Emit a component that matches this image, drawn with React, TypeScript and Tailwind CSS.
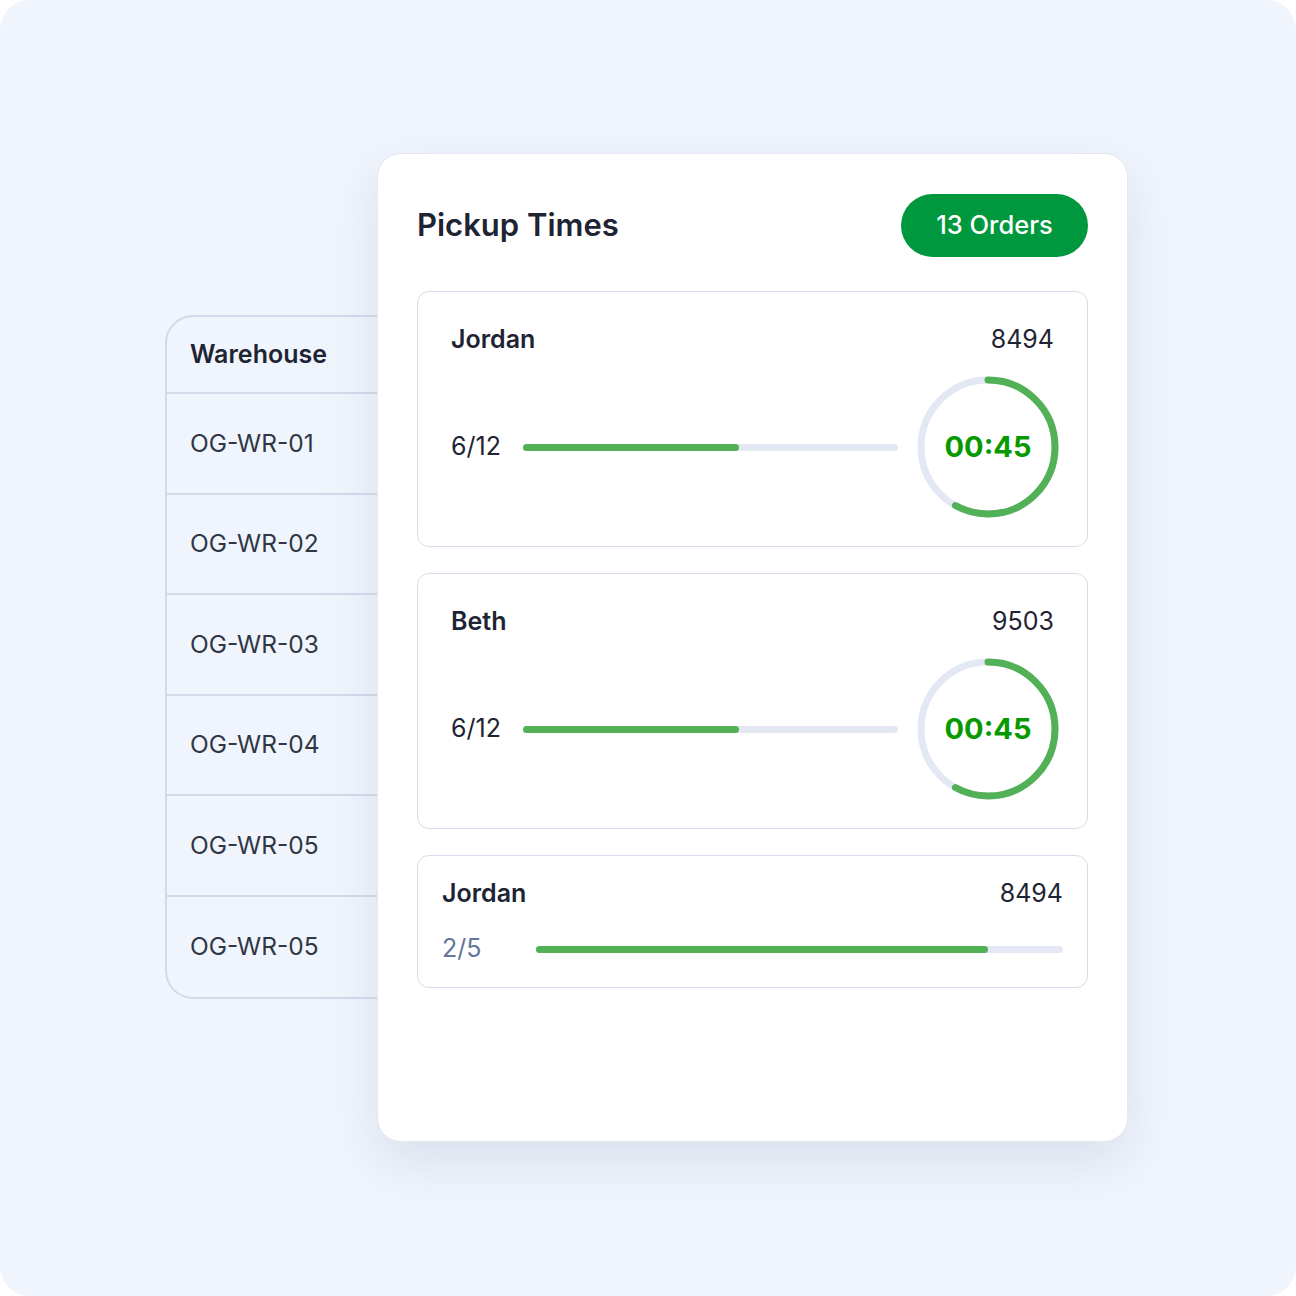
import React from "react";

const font = { fontFamily: "Inter, 'Noto Sans', sans-serif" };

const warehouses = ["OG-WR-01", "OG-WR-02", "OG-WR-03", "OG-WR-04", "OG-WR-05", "OG-WR-05"];

function Ring({ fraction }: { fraction: number }) {
  const r = 67;
  const c = 2 * Math.PI * r;
  return (
    <div className="relative w-[142px] h-[142px] shrink-0">
      <svg width="142" height="142" viewBox="0 0 142 142" className="absolute inset-0">
        <circle cx="71" cy="71" r={r} fill="none" stroke="#e3e8f4" strokeWidth="7" />
        <circle
          cx="71"
          cy="71"
          r={r}
          fill="none"
          stroke="#52b057"
          strokeWidth="7"
          strokeLinecap="round"
          strokeDasharray={`${c * fraction} ${c}`}
          transform="rotate(-90 71 71)"
        />
      </svg>
      <div className="absolute inset-0 flex items-center justify-center text-[29px] font-bold text-[#079a00]">
        00:45
      </div>
    </div>
  );
}

function Bar({ pct }: { pct: number }) {
  return (
    <div className="flex-1 h-[7px] rounded-full bg-[#e3e8f4]">
      <div className="h-full rounded-full bg-[#52b057]" style={{ width: `${pct}%` }} />
    </div>
  );
}

function BigCard({ name, num }: { name: string; num: string }) {
  return (
    <div className="border border-[#d5dcea] rounded-[12px] pt-8 pb-[28px]">
      <div className="flex justify-between items-center px-[33px] h-8">
        <span className="text-[25px] font-semibold text-[#1e2433]">{name}</span>
        <span className="text-[25px] text-[#1e2433]">{num}</span>
      </div>
      <div className="flex items-center mt-[20px] pl-[33px] pr-[28px]">
        <span className="w-[72px] text-[25px] text-[#1e2433]">6/12</span>
        <Bar pct={57.5} />
        <div className="w-[19px]" />
        <Ring fraction={0.58} />
      </div>
    </div>
  );
}

export default function App() {
  return (
    <div className="w-[1296px] h-[1296px] bg-white" style={font}>
      <div className="w-full h-full rounded-[30px] bg-[#f0f4fc] flex items-start pl-[165px] pt-[153px]">
        <div className="mt-[162px] w-[260px] border-2 border-r-0 border-[#d2daea] rounded-l-[28px] bg-[#f0f4fc]">
          <div className="h-[77px] flex items-center pl-[23px] border-b-2 border-[#d2daea] text-[25px] font-semibold text-[#1e2433]">
            Warehouse
          </div>
          {warehouses.map((w, i) => (
            <div
              key={i}
              className={`h-[100.5px] flex items-center pl-[23px] text-[24.5px] text-[#2f3747] ${
                i < warehouses.length - 1 ? "border-b-2 border-[#d2daea]" : ""
              }`}
            >
              {w}
            </div>
          ))}
        </div>
        <div className="ml-[-48px] w-[751px] h-[989px] bg-white rounded-[24px] border border-[#e4e8f1] shadow-[0_20px_50px_rgba(140,155,185,0.22)] px-[39px] pt-[40px] flex flex-col relative">
          <div className="flex justify-between items-center h-[63px]">
            <span className="text-[31px] font-semibold text-[#1e2433]">Pickup Times</span>
            <span className="h-[63px] w-[187px] rounded-full bg-[#00983e] text-white text-[25.5px] font-medium flex items-center justify-center">
              13 Orders
            </span>
          </div>
          <div className="mt-[34px] flex flex-col gap-[26px]">
            <BigCard name="Jordan" num="8494" />
            <BigCard name="Beth" num="9503" />
            <div className="border border-[#d5dcea] rounded-[12px] pt-[22px] pb-[22px]">
              <div className="flex justify-between items-center px-[24px] h-8">
                <span className="text-[25px] font-semibold text-[#1e2433]">Jordan</span>
                <span className="text-[25px] text-[#1e2433]">8494</span>
              </div>
              <div className="flex items-center mt-[23px] px-[24px] h-8">
                <span className="w-[94px] text-[25px] text-[#64769a]">2/5</span>
                <Bar pct={85.7} />
              </div>
            </div>
          </div>
        </div>
      </div>
    </div>
  );
}
